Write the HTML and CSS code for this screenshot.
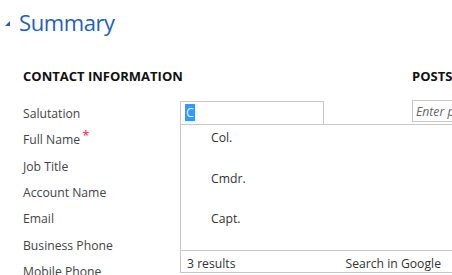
FILE: index.html
```html
<!DOCTYPE html>
<html>
<head>
    <meta charset="utf-8" />
    <link rel="stylesheet" href="styles.css">
</head>
<body>
    <section class="summary-head">
        <svg class="toggle" width="5" height="5" viewBox="0 0 5 5"><polygon points="5,0 5,5 0,5" fill="#1e5fae" /></svg>
        <h1>Summary</h1>
    </section>

    <section class="columns">
        <div class="contact">
            <h2>CONTACT INFORMATION</h2>
            <div class="row">
                <span class="label">Salutation</span>
                <div class="field"><span class="sel">C</span></div>
            </div>
            <div class="row"><span class="label">Full Name<sup class="req">*</sup></span></div>
            <div class="row"><span class="label">Job Title</span></div>
            <div class="row"><span class="label">Account Name</span></div>
            <div class="row"><span class="label">Email</span></div>
            <div class="row"><span class="label">Business Phone</span></div>
            <div class="row"><span class="label">Mobile Phone</span></div>
        </div>

        <div class="posts">
            <h2>POSTS</h2>
            <div class="post-input">Enter post here</div>
        </div>
    </section>

    <div class="dropdown">
        <ul class="results">
            <li>Col.</li>
            <li>Cmdr.</li>
            <li>Capt.</li>
        </ul>
        <div class="results-foot">
            <span>3 results</span>
            <span>Search in Google</span>
        </div>
    </div>
</body>
</html>
```

FILE: styles.css
```css
* {
    padding: 0;
    margin: 0;
    box-sizing: border-box;
}

body {
    font-family: "Open Sans", "Noto Sans", sans-serif;
    font-size: 12.2px;
    color: #444;
    background-color: white;
    overflow: hidden;
    height: 275px;
    position: relative;
}

.summary-head {
    display: flex;
    align-items: center;
    gap: 9px;
    padding: 7px 0 0 5px;
    height: 37px;
}

.summary-head h1 {
    font-weight: normal;
    font-size: 22px;
    letter-spacing: -0.4px;
    line-height: 30px;
    color: #1e62b6;
}

.toggle {
    margin-top: 2px;
}

.columns {
    display: flex;
    margin-top: 30px;
}

.contact {
    flex-shrink: 0;
    width: 412px;
    padding-left: 23px;
}

h2 {
    font-size: 13px;
    font-weight: bold;
    line-height: 18px;
    color: #111;
    margin-bottom: 15px;
    white-space: nowrap;
}

.row {
    display: flex;
    align-items: center;
    height: 26.3px;
    padding-top: 1px;
}

.label {
    width: 157px;
    white-space: nowrap;
}

.req {
    color: #e0282c;
    font-size: 13px;
    vertical-align: top;
    line-height: 8px;
    margin-left: 2px;
}

.field {
    width: 144px;
    height: 24px;
    margin-top: -1px;
    border: 1px solid #c8c8c8;
    padding: 2px 4px;
}

.sel {
    display: inline-block;
    background-color: #3399ff;
    color: #e8f2ff;
    line-height: 17px;
    padding: 0 1px;
}

.posts {
    flex-shrink: 0;
    width: 60px;
}

.post-input {
    margin-top: 1px;
    height: 22px;
    border: 1px solid #c8c8c8;
    border-right: none;
    padding: 2px 3px;
    font-style: italic;
    color: #666;
    white-space: nowrap;
    overflow: hidden;
}

.dropdown {
    position: absolute;
    left: 180px;
    top: 124px;
    width: 290px;
    background-color: white;
    border: 1px solid #c8c8c8;
}

.results {
    list-style: none;
    height: 125px;
    padding: 5px 0 0 30px;
    color: #333;
}

.results li {
    height: 40.5px;
    line-height: 16px;
}

.results-foot {
    display: flex;
    justify-content: space-between;
    border-top: 1px solid #c8c8c8;
    height: 22px;
    line-height: 17px;
    padding: 4px 28px 0 6px;
    color: #333;
}
```
